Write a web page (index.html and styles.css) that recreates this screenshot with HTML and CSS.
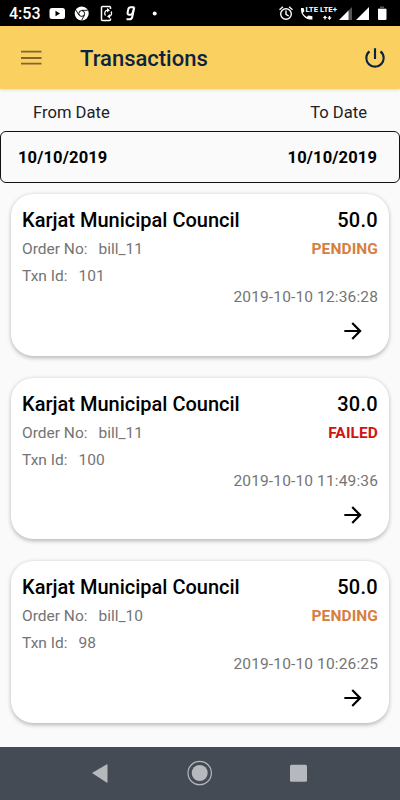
FILE: index.html
```html
<!DOCTYPE html>
<html lang="en">
<head>
<meta charset="utf-8">
<title>Transactions</title>
<link rel="stylesheet" href="styles.css">
</head>
<body>
<div class="screen">
  <div class="status">
    <span class="clock">4:53</span>
    <svg class="status-left" width="112" height="26" viewBox="48 0 112 26">
      <rect x="49.500" y="8" width="15.500" height="11" rx="2.500" fill="#fff"/>
      <path d="M55.500 10.800v5.400l4.600-2.700z" fill="#000"/>
      <circle cx="81.700" cy="13.500" r="7" fill="#fff"/>
      <circle cx="81.700" cy="13.500" r="2.900" fill="#fff" stroke="#000" stroke-width="1"/>
      <path d="M81.700 10.300h6M79 15.200l-3.200-5.300M84.500 15.200l-3 5.200" stroke="#000" stroke-width=".9"/>
      <path d="M110.500 9V7.500q0-1-1-1h-7q-1 0-1 1v12q0 1 1 1h7q1 0 1-1V18.500" fill="none" stroke="#fff" stroke-width="1.500"/>
      <path d="M105.500 15.500a3.200 3.200 0 0 1 2-5.300M111 11.500a3.200 3.200 0 0 1-2 5" fill="none" stroke="#fff" stroke-width="1.300"/>
      <path d="M107 8l3 2.200-3 2.200zM110 14l-3 2.400 3 2.200z" fill="#fff"/>
      <path d="M134.300 7.200h-3.600q-2 0-2.400 2l-.7 3.500q-.3 2 1.500 2h1.400q1.500 0 2-1.700l1.800-5.800-2 9.500q-.5 2.600-2.600 2.600h-3.200" fill="none" stroke="#fff" stroke-width="2"/>
      <circle cx="154.700" cy="13.500" r="2" fill="#fff"/>
    </svg>
    <svg class="status-right" width="114" height="26" viewBox="277 0 114 26">
      <g fill="none" stroke="#fff" stroke-width="1.400">
        <circle cx="286" cy="14" r="5.300"/>
        <path d="M286 10.500v3.800l2.700 1.700M279.500 9.700l3.400-2.900M292.500 9.700l-3.400-2.900"/>
      </g>
      <path d="M301 8h2.600l.8 3.300-1.700 1.700q1.400 2.600 4 4l1.700-1.600 4 .8v3.400q-5 .3-8.500-3.200T301 8z" fill="#fff"/>
      <text x="305.500" y="12.200" class="net" textLength="12.500" lengthAdjust="spacingAndGlyphs">LTE</text>
      <text x="320" y="12.200" class="net" textLength="17" lengthAdjust="spacingAndGlyphs">LTE+</text>
      <path d="M325 15.500l2.200 2.500h-1.500v1.500h-1.400V18h-1.500zM329.500 20l-2.200-2.500h1.500V16h1.400v1.500h1.500z" fill="#fff"/>
      <path d="M339 20L352 7v13z" fill="#555"/>
      <path d="M339 20l9.500-9.500V20zM356 20L369 7v13z" fill="#fff"/>
      <path d="M378 8h2V6.500h4V8h2v2h-8z" fill="#555"/>
      <path d="M378 9h8.500v10q0 1-1 1H379q-1 0-1-1z" fill="#fff"/>
    </svg>
  </div>
  <header class="appbar">
    <svg class="menu" width="22" height="16" viewBox="0 0 22 16"><path d="M1 1.700h20.500M1 8h20.500M1 13.700h20.500" stroke="#80662d" stroke-width="1.800"/></svg>
    <h1>Transactions</h1>
    <svg class="power" width="26" height="26" viewBox="0 0 24 24"><path fill="#0c2340" d="M13 3h-2v10h2V3zm4.830 2.170l-1.420 1.420A6.920 6.920 0 0 1 19 12c0 3.870-3.130 7-7 7s-7-3.130-7-7c0-2.190 1.010-4.140 2.580-5.420L6.170 5.170A8.932 8.932 0 0 0 3 12a9 9 0 0 0 18 0c0-2.740-1.230-5.180-3.170-6.830z"/></svg>
  </header>
  <div class="labels"><span>From Date</span><span>To Date</span></div>
  <div class="dates"><span>10/10/2019</span><span>10/10/2019</span></div>
  <main class="list">
    <article class="card">
      <div class="row title"><span>Karjat Municipal Council</span><span class="amount">50.0</span></div>
      <div class="row order"><span>Order No:<i>bill_11</i></span><b class="pending">PENDING</b></div>
      <div class="row txn"><span>Txn Id:<i>101</i></span></div>
      <div class="when">2019-10-10 12:36:28</div>
      <svg class="arrow" width="26" height="26" viewBox="0 0 24 24"><path d="M12 4l-1.410 1.410L16.170 11H4v2h12.170l-5.580 5.590L12 20l8-8z"/></svg>
    </article>
    <article class="card">
      <div class="row title"><span>Karjat Municipal Council</span><span class="amount">30.0</span></div>
      <div class="row order"><span>Order No:<i>bill_11</i></span><b class="failed">FAILED</b></div>
      <div class="row txn"><span>Txn Id:<i>100</i></span></div>
      <div class="when">2019-10-10 11:49:36</div>
      <svg class="arrow" width="26" height="26" viewBox="0 0 24 24"><path d="M12 4l-1.410 1.410L16.170 11H4v2h12.170l-5.580 5.590L12 20l8-8z"/></svg>
    </article>
    <article class="card">
      <div class="row title"><span>Karjat Municipal Council</span><span class="amount">50.0</span></div>
      <div class="row order"><span>Order No:<i>bill_10</i></span><b class="pending">PENDING</b></div>
      <div class="row txn"><span>Txn Id:<i>98</i></span></div>
      <div class="when">2019-10-10 10:26:25</div>
      <svg class="arrow" width="26" height="26" viewBox="0 0 24 24"><path d="M12 4l-1.410 1.410L16.170 11H4v2h12.170l-5.580 5.590L12 20l8-8z"/></svg>
    </article>
  </main>
  <nav class="navbar">
    <svg width="400" height="53" viewBox="0 0 400 53" fill="#b5b8bc">
      <path d="M92 26l14.500-8.500q1-.5 1 .5v17q0 1-1 .5z"/>
      <circle cx="199.700" cy="26" r="8"/>
      <circle cx="199.700" cy="26" r="11.700" fill="none" stroke="#b5b8bc" stroke-width="1.200"/>
      <rect x="290" y="17.700" width="17" height="17" rx="1.500"/>
    </svg>
  </nav>
</div>
</body>
</html>
```

FILE: styles.css
```css
* { box-sizing: border-box; }
body { margin: 0; font-family: Roboto, sans-serif; background: #fafafa; }
svg { display: block; flex: none; }
.screen { width: 400px; height: 800px; display: flex; flex-direction: column; overflow: hidden; }
.status { height: 26px; flex: none; background: #000; display: flex; align-items: center; padding: 0 9px; }
.clock { width: 39px; color: #fff; font-size: 16px; font-weight: 500; line-height: 26px; padding-top: 2px; }
.status-right { margin-left: auto; }
.net { fill: #fff; font-size: 7.500px; font-weight: 700; }
.appbar { height: 63px; flex: none; background: #fad160; display: flex; align-items: center; padding: 1px 12px 0 20px; box-shadow: 0 1px 3px #0002; }
.appbar h1 { margin: 2px 0 0 38px; font-size: 22px; font-weight: 500; line-height: 30px; color: #0c2340; }
.power { margin-left: auto; }
.labels { height: 42px; flex: none; display: flex; justify-content: space-between; padding: 10px 33px 0; font-size: 16.600px; line-height: 28px; color: #222; }
.dates { height: 52px; flex: none; display: flex; justify-content: space-between; align-items: center; padding: 1px 22px 0 17px; border: 1.300px solid #111; border-radius: 6px; font-size: 16.500px; letter-spacing: .15px; font-weight: 700; color: #000; }
.list { flex: 1; padding: 11px 11px 0; display: flex; flex-direction: column; gap: 22px; }
.card { height: 161.700px; flex: none; background: #fff; border-radius: 22px; padding: 12px 11px 0; box-shadow: 0 1.500px 4px #0004; display: flex; flex-direction: column; }
.row { display: flex; justify-content: space-between; }
.title { height: 26px; line-height: 29px; font-size: 20px; font-weight: 500; color: #000; }
.amount { letter-spacing: .3px; }
.order { height: 26px; margin-top: 4px; line-height: 26px; }
.txn { height: 27px; line-height: 29px; }
.order, .txn, .when { font-size: 15.500px; color: #747474; }
.row i { font-style: normal; margin-left: 11px; }
.order .pending { color: #d5803f; letter-spacing: .1px; }
.order .failed { color: #d01414; letter-spacing: .1px; }
.when { align-self: flex-end; height: 16px; line-height: 16px; letter-spacing: .14px; }
.arrow { align-self: flex-end; margin: 13px 12px 0 0; }
.navbar { height: 53px; flex: none; background: #454b54; }
```
